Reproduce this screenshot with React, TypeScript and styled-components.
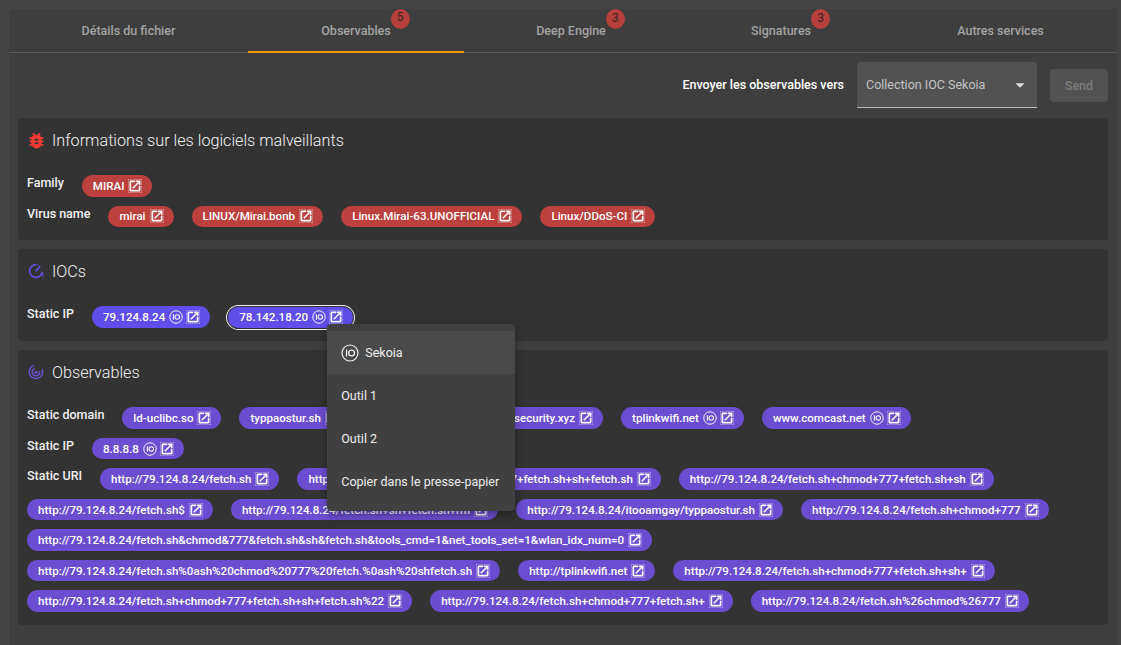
import React from "react";
import styled, { createGlobalStyle } from "styled-components";
import { MdBugReport, MdOpenInNew, MdArrowDropDown } from "react-icons/md";

const GlobalStyle = createGlobalStyle`
  html, body {
    margin: 0;
    padding: 0;
    background: #444444;
    font-family: Roboto, "Liberation Sans", sans-serif;
    color: #ffffff;
  }
  * {
    box-sizing: border-box;
  }
`;

const HOST = "http://79.124.8.24/";

const TABS = [
  { label: "Détails du fichier", width: 239 },
  { label: "Observables", width: 216, count: 5, active: true },
  { label: "Deep Engine", width: 214, count: 3 },
  { label: "Signatures", width: 206, count: 3 },
  { label: "Autres services", width: 233 },
];

const DOMAINS = [
  { text: "ld-uclibc.so" },
  { text: "typpaostur.sh" },
  { text: "update.mirai-botnet-hosti-security.xyz" },
  { text: "tplinkwifi.net", sekoia: true },
  { text: "www.comcast.net", sekoia: true },
];

const URIS = [
  HOST + "fetch.sh",
  HOST + "fetch.sh+chmod+777+fetch.sh+sh+fetch.sh",
  HOST + "fetch.sh+chmod+777+fetch.sh+sh",
  HOST + "fetch.sh$",
  HOST + "fetch.sh+sh+fetch.sh+rm",
  HOST + "itooamgay/typpaostur.sh",
  HOST + "fetch.sh+chmod+777",
  HOST + "fetch.sh&chmod&777&fetch.sh&sh&fetch.sh&tools_cmd=1&net_tools_set=1&wlan_idx_num=0",
  HOST + "fetch.sh%0ash%20chmod%20777%20fetch.%0ash%20shfetch.sh",
  "http://tplinkwifi.net",
  HOST + "fetch.sh+chmod+777+fetch.sh+sh+",
  HOST + "fetch.sh+chmod+777+fetch.sh+sh+fetch.sh%22",
  HOST + "fetch.sh+chmod+777+fetch.sh+",
  HOST + "fetch.sh%26chmod%26777",
];

function SekoiaLogo({ size }: { size: number }) {
  return (
    <svg width={size} height={size} viewBox="0 0 18 18" fill="none" stroke="currentColor">
      <circle cx="9" cy="9" r="8" strokeWidth="1.2" />
      <path d="M5.6 5.6v6.8" strokeWidth="1.3" />
      <circle cx="10.6" cy="9" r="2.9" strokeWidth="1.3" />
    </svg>
  );
}

function IocIcon() {
  return (
    <svg width="16" height="16" viewBox="0 0 16 16" fill="none" stroke="#5f4ee9">
      <path d="M8 1.6a6.4 6.4 0 1 0 6.3 7.4" strokeWidth="1.6" />
      <path d="M7.6 8.4l4.6-5.2" strokeWidth="1.7" />
      <path d="M8 1.6c1.8 0 3.2.6 4.4 1.6" strokeWidth="1" opacity="0.6" />
      <path d="M15 10.4v3.2" strokeWidth="1" />
      <path d="M15 14.6v1" strokeWidth="1" />
    </svg>
  );
}

function RadarIcon() {
  return (
    <svg width="16" height="16" viewBox="0 0 16 16" fill="none" stroke="#6b4dd1">
      <path d="M6.2 1.4a6.7 6.7 0 1 0 7.9 3.8" strokeWidth="1.5" />
      <path d="M6.6 4.6a3.7 3.7 0 1 0 4.9 2.4" strokeWidth="1.5" />
      <circle cx="8" cy="8.2" r="1.5" fill="#6b4dd1" stroke="none" />
    </svg>
  );
}

interface ChipProps {
  text: string;
  color: string;
  sekoia?: boolean;
  selected?: boolean;
}

function Tag({ text, color, sekoia, selected }: ChipProps) {
  return (
    <Chip $color={color} $selected={selected}>
      {text}
      {sekoia && (
        <ChipLogo>
          <SekoiaLogo size={14} />
        </ChipLogo>
      )}
      <LinkIcon size={14} />
    </Chip>
  );
}

export default function App() {
  return (
    <>
      <GlobalStyle />
      <Page>
        <Panel>
          <TabBar>
            {TABS.map((tab) => (
              <Tab key={tab.label} $width={tab.width} $active={tab.active}>
                <TabLabel>
                  {tab.label}
                  {tab.count && <Badge>{tab.count}</Badge>}
                </TabLabel>
              </Tab>
            ))}
          </TabBar>

          <Content>
            <Toolbar>
              <ToolbarLabel>Envoyer les observables vers</ToolbarLabel>
              <Select>
                Collection IOC Sekoia
                <MdArrowDropDown size={22} color="#e0e0e0" />
              </Select>
              <SendButton>Send</SendButton>
            </Toolbar>

            <Card>
              <CardHeader>
                <BugIcon size={21} />
                <CardTitle>Informations sur les logiciels malveillants</CardTitle>
              </CardHeader>
              <Rows>
                <Row>
                  <RowLabel>Family</RowLabel>
                  <Tag text="MIRAI" color="#bb403e" />
                </Row>
                <Row>
                  <RowLabel>Virus name</RowLabel>
                  <Tag text="mirai" color="#bb403e" />
                  <Tag text="LINUX/Mirai.bonb" color="#bb403e" />
                  <Tag text="Linux.Mirai-63.UNOFFICIAL" color="#bb403e" />
                  <Tag text="Linux/DDoS-CI" color="#bb403e" />
                </Row>
              </Rows>
            </Card>

            <Card>
              <CardHeader>
                <IocIcon />
                <CardTitle>IOCs</CardTitle>
              </CardHeader>
              <Rows>
                <Row>
                  <RowLabel>Static IP</RowLabel>
                  <Tag text="79.124.8.24" color="#5f4ee9" sekoia />
                  <MenuAnchor>
                    <Tag text="78.142.18.20" color="#5f4ee9" sekoia selected />
                    <Menu>
                      <MenuItem $active>
                        <SekoiaLogo size={18} />
                        Sekoia
                      </MenuItem>
                      <MenuItem>Outil 1</MenuItem>
                      <MenuItem>Outil 2</MenuItem>
                      <MenuItem>Copier dans le presse-papier</MenuItem>
                    </Menu>
                  </MenuAnchor>
                </Row>
              </Rows>
            </Card>

            <Card>
              <CardHeader>
                <RadarIcon />
                <CardTitle>Observables</CardTitle>
              </CardHeader>
              <Rows>
                <Row>
                  <RowLabel>Static domain</RowLabel>
                  {DOMAINS.map((domain) => (
                    <Tag key={domain.text} text={domain.text} color="#6b4dd1" sekoia={domain.sekoia} />
                  ))}
                </Row>
                <Row>
                  <RowLabel>Static IP</RowLabel>
                  <Tag text="8.8.8.8" color="#6b4dd1" sekoia />
                </Row>
                <Row>
                  <RowLabel>Static URI</RowLabel>
                  {URIS.map((uri) => (
                    <Tag key={uri} text={uri} color="#6b4dd1" />
                  ))}
                </Row>
              </Rows>
            </Card>
          </Content>
        </Panel>
      </Page>
    </>
  );
}

const Page = styled.div`
  width: 1121px;
  height: 645px;
  padding: 9px 4px 0 9px;
  overflow: hidden;
`;

const Panel = styled.main`
  height: 100%;
  background: #3e3e3e;
`;

const TabBar = styled.nav`
  display: flex;
  height: 44px;
  border-bottom: 1px solid #5a5a5a;
`;

const Tab = styled.div<{ $width: number; $active?: boolean }>`
  flex: 0 0 ${(p) => p.$width}px;
  display: flex;
  align-items: center;
  justify-content: center;
  border-bottom: ${(p) => (p.$active ? "2px solid #f59300" : "none")};
  height: ${(p) => (p.$active ? "44px" : "43px")};
`;

const TabLabel = styled.span`
  position: relative;
  font-size: 12.5px;
  font-weight: 500;
  color: #a3a3a3;
`;

const Badge = styled.span`
  position: absolute;
  left: 100%;
  top: -14px;
  width: 19px;
  height: 20px;
  border-radius: 50%;
  background: #b5403e;
  color: #3a2323;
  font-size: 12px;
  font-weight: 400;
  display: flex;
  align-items: center;
  justify-content: center;
  padding-bottom: 3px;
`;

const Content = styled.div`
  padding: 0 9px;
  display: flex;
  flex-direction: column;
  gap: 9px;
`;

const Toolbar = styled.div`
  height: 65px;
  margin-bottom: -9px;
  padding-top: 9px;
  display: flex;
  align-items: flex-start;
  justify-content: flex-end;
`;

const ToolbarLabel = styled.span`
  font-size: 12.5px;
  font-weight: 500;
  color: #ffffff;
  margin: 15px 13px 0 0;
`;

const Select = styled.div`
  width: 180px;
  height: 46px;
  padding: 0 6px 0 9px;
  display: flex;
  align-items: center;
  justify-content: space-between;
  background: #525252;
  border-bottom: 1px solid #bdbdbd;
  border-radius: 4px 4px 0 0;
  font-size: 12.5px;
  color: #c4c4c4;
`;

const SendButton = styled.div`
  width: 58px;
  height: 33px;
  margin: 7px 0 0 13px;
  display: flex;
  align-items: center;
  justify-content: center;
  background: #525252;
  border-radius: 4px;
  font-size: 12.5px;
  font-weight: 500;
  color: #7d7d7d;
`;

const Card = styled.section`
  background: #333333;
  border-radius: 4px;
  padding: 0 9px 13.25px;
`;

const CardHeader = styled.header`
  height: 44px;
  margin-bottom: 13px;
  padding-left: 1px;
  display: flex;
  align-items: center;
  gap: 8px;
`;

const CardTitle = styled.h2`
  margin: 0;
  font-size: 16.2px;
  font-weight: 300;
  color: #f2f2f2;
`;

const BugIcon = styled(MdBugReport)`
  margin: 0 -2.5px;
  color: #f03b35;
`;

const Rows = styled.div`
  display: flex;
  flex-direction: column;
  gap: 9px;
`;

const Row = styled.div`
  display: flex;
  flex-wrap: wrap;
  column-gap: 18px;
  row-gap: 9px;
`;

const RowLabel = styled.span`
  font-size: 12.5px;
  font-weight: 500;
  line-height: 16px;
  color: #f2f2f2;
`;

const Chip = styled.span<{ $color: string; $selected?: boolean }>`
  display: inline-flex;
  align-items: center;
  gap: 4px;
  height: 21.5px;
  padding: 0 10px 0 11px;
  border-radius: 11px;
  background: ${(p) => p.$color};
  color: #ffffff;
  font-size: 11.58px;
  font-weight: 500;
  white-space: nowrap;
  box-shadow: ${(p) => (p.$selected ? "0 0 0 1px #333333, 0 0 0 2px #f0f0f0" : "none")};
`;

const ChipLogo = styled.span`
  display: inline-flex;
  margin-right: -1px;
`;

const LinkIcon = styled(MdOpenInNew)`
  stroke: currentColor;
  stroke-width: 0.8;
`;

const MenuAnchor = styled.div`
  position: relative;
`;

const Menu = styled.div`
  position: absolute;
  left: 99px;
  top: 18px;
  z-index: 10;
  width: 188px;
  padding: 7px 0 8px;
  background: #404040;
  border-radius: 4px;
  box-shadow: 0 4px 10px rgba(0, 0, 0, 0.35);
`;

const MenuItem = styled.div<{ $active?: boolean }>`
  height: 43px;
  padding: 0 14px;
  display: flex;
  align-items: center;
  gap: 6px;
  background: ${(p) => (p.$active ? "#4a4a4a" : "transparent")};
  font-size: 12.5px;
  font-weight: 400;
  color: #eeeeee;
  white-space: nowrap;
`;
